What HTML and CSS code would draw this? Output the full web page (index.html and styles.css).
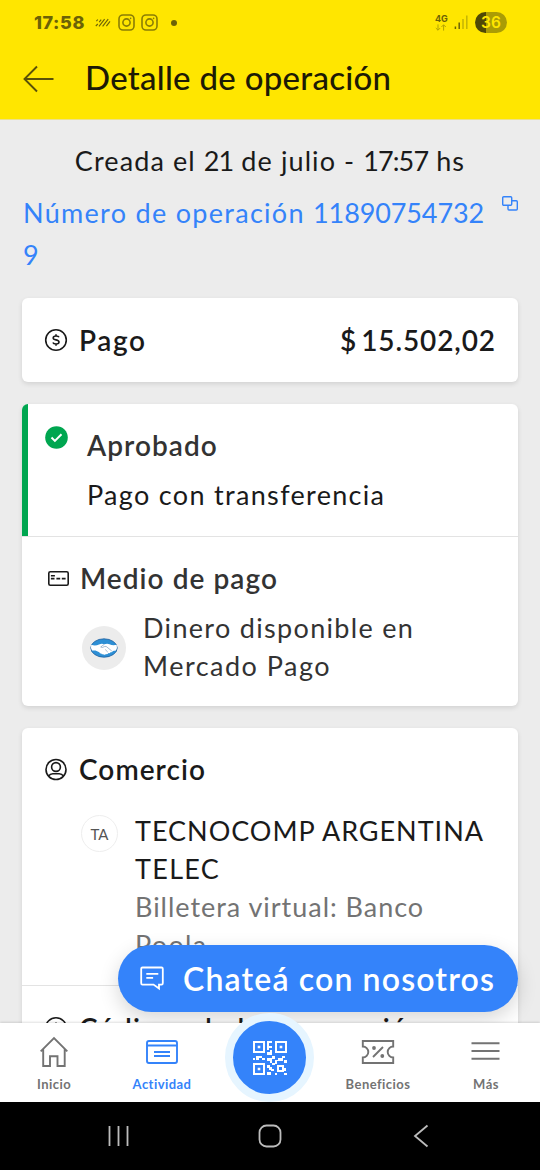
FILE: index.html
```html
<!DOCTYPE html>
<html lang="es">
<head>
<meta charset="utf-8">
<title>Detalle de operación</title>
<link rel="stylesheet" href="styles.css">
</head>
<body>
<div class="phone">
  <header class="top">
    <div class="status">
      <span class="clock">17:58</span>
      <svg class="rain" width="16" height="10" viewBox="0 0 16 10"><path d="M.8 8 2.8 6M1.400 3.200 2.800 1.500M4 8.400 9.600 1.200M7.600 8.400 13.200 1.200M4.200 4.200 6.200 1.600M11.400 8.200 15 3.400"/></svg>
      <svg class="insta" width="17" height="17" viewBox="0 0 17 17"><rect x="1" y="1" width="15" height="15" rx="4"/><circle cx="8.500" cy="8.500" r="3.600"/><circle class="dot" cx="12.600" cy="4.400" r=".8"/></svg>
      <svg class="insta second" width="17" height="17" viewBox="0 0 17 17"><rect x="1" y="1" width="15" height="15" rx="4"/><circle cx="8.500" cy="8.500" r="3.600"/><circle class="dot" cx="12.600" cy="4.400" r=".8"/></svg>
      <i class="more"></i>
      <div class="network"><span class="net-label">4G</span><svg width="12" height="7" viewBox="0 0 12 7"><path d="M3 .4v5.800M.8 4 3 6.200 5.200 4M8.600 6.600V.8M6.400 3 8.600.8 10.800 3"/></svg></div>
      <svg class="signal" width="14" height="15" viewBox="0 0 14 15"><path class="on" d="M1.400 11.400V14M5.200 7.500V14"/><path class="off" d="M9 4v10M12.800.5V14"/></svg>
      <span class="battery">36</span>
    </div>
    <div class="titlebar">
      <svg width="32" height="28" viewBox="0 0 32 28"><path d="M30.500 14H2M14 1.500 1.500 14 14 26.500"/></svg>
      <h1>Detalle de operación</h1>
    </div>
  </header>

  <main class="content">
    <p class="created">Creada el <span class="num">21</span> de julio - <span class="num">17:57</span> hs</p>
    <div class="opnum">
      <p>Número de operación <span class="num">11890754732</span><br>9</p>
      <svg width="16" height="15" viewBox="0 0 16 15"><rect x=".7" y=".7" width="9" height="8.600" rx="1"/><path d="M9.700 4.700h4.600q1 0 1 1v7.300q0 1-1 1H7q-1 0-1-1V9.300"/></svg>
    </div>

    <section class="card amount">
      <svg class="ic" width="24" height="24" viewBox="0 0 24 24"><circle cx="12" cy="12" r="10.300"/><path d="M15 9.300Q14.600 8 12.100 8 9.200 8 9.200 9.900c0 2.700 5.800 1.300 5.800 4.100 0 2-2.900 2-2.900 2-2.700 0-3.200-1.600-3.200-1.600M12 6.200V8m0 8v1.800"/></svg>
      <h2 class="t-pago">Pago</h2>
      <strong class="sum"><span>$</span>15.502,02</strong>
    </section>

    <section class="card">
      <div class="approved">
        <svg width="23" height="23" viewBox="0 0 23 23"><circle cx="11.500" cy="11.500" r="11.300"/><path d="m6.500 11.500 3.400 3.400L16.500 8.300"/></svg>
        <div><h2>Aprobado</h2><p class="wide">Pago con transferencia</p></div>
      </div>
      <div class="method">
        <div class="head">
          <svg class="ic" width="21" height="15" viewBox="0 0 21 15"><rect x=".8" y=".8" width="19.400" height="13.400" rx="1.500"/><path d="M2.900 4.700h4M2.900 7.600h3.600M8.400 7.600h3.800M13.800 7.600h3.800"/></svg>
          <h2>Medio de pago</h2>
        </div>
        <div class="funds">
          <span class="wallet"><svg width="28" height="20" viewBox="0 0 28 20"><ellipse cx="14" cy="10" rx="13.200" ry="9.200" fill="#2d8fd5" stroke="#1f5f9e" stroke-width=".8"/><path d="M1.200 6.800Q5.500 8.300 9 6.400q3-1.300 5.300-.1Q17 5.200 19.500 6.200q3 1.500 7.200.6.800 3-.7 5.600l-3.200.6q-.6 1.500-2 1.100-.6 1.600-2.200 1-.9 1.500-2.400.9-1.600 1.300-2.900.2-1.500.5-2-.8-1.600.2-2-1.200L5.500 12.600 2 12.400Q.4 10 1.200 6.800Z" fill="#fff"/><path d="M14.300 6.300 10.700 9q1.700 1.200 3.600-.4l1.800-.2 5.700 4.600M15.200 11.500l2.600 2.600" stroke="#7f9dbd" stroke-width=".7"/></svg></span>
          <p><span class="wide">Dinero disponible en</span><br><span class="wide merc">Mercado Pago</span></p>
        </div>
      </div>
    </section>

    <section class="card shop">
      <div class="head">
        <svg class="ic" width="24" height="24" viewBox="0 0 24 24"><circle cx="12" cy="12.500" r="10"/><circle cx="12" cy="10" r="4.400"/><path d="M4.600 19.200Q6 16.800 8.800 16.800h6.400q2.800 0 4.200 2.400"/></svg>
        <h2>Comercio</h2>
      </div>
      <div class="merchant">
        <span class="avatar">TA</span>
        <p>TECNOCOMP ARGENTINA<br><span class="wide">TELEC</span><br><span class="bank">Billetera virtual: Banco<br><span class="wide">Poola</span></span></p>
      </div>
      <div class="codes">
        <svg class="ic" width="24" height="24" viewBox="0 0 24 24"><circle cx="12" cy="12" r="10.300"/><path d="M12 6.500v2M12 10.500v7"/></svg>
        <h2>Códigos de la transacción</h2>
      </div>
    </section>
  </main>

  <button class="chat">
    <svg width="24" height="25" viewBox="0 0 24 25"><path d="M2.500 1.500h19q1.300 0 1.300 1.300v14.500q0 1.300-1.300 1.300H19v4l-5.500-4h-11q-1.300 0-1.300-1.300V2.800q0-1.300 1.300-1.300ZM6.300 7.900h12M6.300 11.800h6.800"/></svg>
    <span>Chateá con nosotros</span>
  </button>

  <nav class="tabs">
    <a class="tab"><svg width="30" height="32" viewBox="0 0 30 32"><path d="M1.700 15.300 15 2l13.300 13.300M4.200 13v17h6.800V20.200h7.500V30h7.200V13"/></svg><span>Inicio</span></a>
    <a class="tab active"><svg width="34" height="32" viewBox="0 0 34 32"><rect x="2" y="5" width="30" height="22" rx="2"/><path d="M2 9.500h30M9 16h16M9 20h16"/></svg><span>Actividad</span></a>
    <a class="qr"><svg width="34" height="34" viewBox="0 0 34 34"><path d="M1 1h10v10H1ZM23 1h10v10H23ZM1 23h10v10H1Z" stroke="#fff" stroke-width="2"/><path d="M4.700 4.700h2.600v2.600H4.700ZM26.700 4.700h2.600v2.600h-2.600ZM4.700 26.700h2.600v2.600H4.700ZM14 0h5v2h-3v3h3v2h-3v2h-2ZM17 9h2v5h-5v-3h3ZM0 17h2v2H0ZM3 15h6v2H6v2H3ZM9 17h3v2H9ZM14 17h5v-2h3v3h-3v4h-2v-2h-3ZM22 19h3v-2h4v-2h3v2h-2v3h-6v3h-2ZM31 19h3v3h-3ZM14 24h3v2h2v3h-3v-2h-2ZM19 22h3v2h-3ZM14 31h4v3h-4ZM18 28h3v2h-3ZM22 32h2v2h-2ZM31 27h2v3h-2ZM31 32h3v2h-3Z" fill="#fff"/><path d="M25 25h5v5h-5Z" stroke="#fff" stroke-width="2"/></svg></a>
    <a class="tab"><svg width="34" height="32" viewBox="0 0 34 32"><path d="M1.800 5h30.400v5.500a5.500 5.500 0 0 0 0 11V27H1.800v-5.500a5.500 5.500 0 0 0 0-11ZM12 21l10-10"/><circle cx="13" cy="12" r="1.900" class="fill"/><circle cx="21.300" cy="20" r="1.900" class="fill"/></svg><span>Beneficios</span></a>
    <a class="tab"><svg width="30" height="32" viewBox="0 0 30 32"><path d="M.5 7.200h28M.5 15h28M.5 22.800h28"/></svg><span>Más</span></a>
  </nav>

  <footer class="system">
    <svg width="22" height="24" viewBox="0 0 22 24"><path d="M1.500 2v20M10.500 2v20M19.500 2v20"/></svg>
    <svg width="24" height="24" viewBox="0 0 24 24"><rect x="1.500" y="1.500" width="21" height="21" rx="7"/></svg>
    <svg width="16" height="24" viewBox="0 0 16 24"><path d="M14.500 1.500 2 12l12.500 10.500"/></svg>
  </footer>
</div>
</body>
</html>
```
FILE: styles.css
```css
* { box-sizing: border-box; margin: 0; padding: 0; }
body { background: #ececec; font-family: Lato, "Open Sans", sans-serif; color: #1a1a1a; }
svg { flex: none; display: block; fill: none; }
.phone { position: relative; width: 540px; height: 1170px; overflow: hidden; display: flex; flex-direction: column; background: #ececec; }

.top { height: 120px; flex: none; background: #ffe600; border-bottom: 1px solid #ece08a; }
.status { height: 44px; padding: 1px 33px 0 34px; display: flex; align-items: center; color: #6c6206; }
.clock { font: 800 18px/20px Inter, sans-serif; width: 61px; letter-spacing: .6px; }
.rain { stroke: #6c6206; stroke-width: 1.1; }
.insta { stroke: #8a7d05; stroke-width: 1.6; margin-left: 7px; }
.insta .dot { fill: #8a7d05; stroke: none; }
.second { margin-left: 6px; }
.more { width: 6px; height: 6px; border-radius: 50%; background: #6c6206; margin-left: 13px; }
.network { margin-left: auto; width: 13px; }
.net-label { display: block; font: 700 9px/9px Inter, sans-serif; }
.network svg { stroke: #b3a305; stroke-width: 1; margin-top: 1px; }
.signal { margin: 0 7px 0 6px; }
.signal .on { stroke: #6c6206; stroke-width: 1.5; }
.signal .off { stroke: #c4b404; stroke-width: 1.5; }
.battery { width: 32px; height: 21px; border-radius: 11px; background: linear-gradient(90deg, #4f4806 0 11.5px, #aa9c05 11.5px); color: #ffe600; font: 600 15.5px/21px Inter, sans-serif; text-align: center; }
.titlebar { display: flex; align-items: center; height: 70px; padding-left: 23px; }
.titlebar svg { stroke: #5a5108; stroke-width: 1.9; margin-right: 30px; }
h1 { font: 500 33px/40px Lato, sans-serif; color: #1d1a05; letter-spacing: .28px; margin-top: -4px; }

.content { flex: 1; min-height: 0; overflow: hidden; padding: 22px 22px 0; font-size: 27px; }
.created { text-align: center; line-height: 38px; letter-spacing: 1.1px; }
.num { letter-spacing: -.9px; }
.opnum { display: flex; justify-content: space-between; color: #3483fa; line-height: 42px; margin: 12px 0 22px; padding-left: 1px; letter-spacing: 1.3px; }
.opnum .num { letter-spacing: -.12px; }
.opnum svg { stroke: #3483fa; stroke-width: 1.4; margin-top: 4px; }
.card { background: #fff; border-radius: 6px; box-shadow: 0 2px 5px rgba(0,0,0,.11); margin-bottom: 22px; overflow: hidden; }
.ic { stroke: #1a1a1a; stroke-width: 1.6; }
h2 { font-size: 28px; font-weight: 600; line-height: 38px; white-space: nowrap; letter-spacing: 1.05px; }
.t-pago { letter-spacing: 1.6px; }
p { white-space: nowrap; }
.wide { letter-spacing: 1.32px; }
.merc { letter-spacing: 1.5px; }
.amount { height: 84px; display: flex; align-items: center; padding: 0 22px 0 22px; }
.amount h2 { margin-left: 11px; }
.sum { margin-left: auto; font-size: 28px; font-weight: 600; letter-spacing: .9px; }
.sum span { margin-right: 4px; }
.approved { height: 132px; border-left: 6px solid #00a650; display: flex; padding: 23px 0 0 17px; }
.approved svg { margin-top: -1px; }
.approved svg circle { fill: #00a650; }
.approved svg path { stroke: #fff; stroke-width: 2; }
.approved div { margin: -1px 0 0 19px; }
.approved h2 { color: #333; }
.approved p { line-height: 38px; margin-top: 12px; }
.method { height: 170px; border-top: 1px solid #e3e3e3; padding: 22px 0 0 26px; color: #333; }
.head { display: flex; align-items: center; }
.method .head h2 { margin-left: 11px; }
.funds { display: flex; padding-left: 34px; margin-top: 12px; line-height: 38px; }
.wallet { width: 44px; height: 44px; border-radius: 50%; background: #ececec; display: grid; place-items: center; margin: 17px 17px 0 0; }
.shop { padding-top: 22px; height: 340px; }
.shop .head { padding-left: 22px; }
.shop .head h2 { margin-left: 11px; }
.merchant { display: flex; padding-left: 59px; height: 173px; line-height: 38px; margin-top: 24px; letter-spacing: .97px; }
.avatar { width: 37px; height: 37px; border: 1px solid #eee; border-radius: 50%; font-size: 15px; line-height: 36px; letter-spacing: 0; text-align: center; color: #555; margin: 3px 17px 0 0; }
.bank { color: #737373; }
.codes { border-top: 1px solid #e3e3e3; display: flex; align-items: center; padding: 23px 0 0 22px; }
.codes h2 { margin-left: 11px; letter-spacing: 1.3px; }

.chat { position: absolute; left: 118px; top: 945px; width: 400px; height: 67px; border: 0; border-radius: 34px; background: #3483fa; color: #fff; display: flex; align-items: center; padding-left: 22px; box-shadow: 0 7px 20px rgba(0,0,0,.16); }
.chat svg { stroke: #fff; stroke-width: 1.8; margin-right: 19px; }
.chat span { font: 600 32px/40px Lato, sans-serif; white-space: nowrap; letter-spacing: 1.15px; }

.tabs { height: 79px; flex: none; background: #fff; display: grid; grid-template-columns: repeat(5, 108px); position: relative; box-shadow: 0 -1px 2px rgba(0,0,0,.12); }
.tab { display: flex; flex-direction: column; align-items: center; padding-top: 13px; color: #737373; font-size: 13px; font-weight: 700; line-height: 18px; letter-spacing: .45px; }
.tab svg { stroke: currentColor; stroke-width: 1.9; margin-bottom: 7px; }
.tab .fill { fill: currentColor; stroke: none; }
.active { color: #3483fa; }
.qr { width: 89px; height: 89px; border: 8px solid #e6f5ff; border-radius: 50%; background: #3483fa; display: grid; place-items: center; margin: -10px 0 0 9px; }
.system { height: 68px; flex: none; background: #000; display: flex; align-items: center; padding-left: 108px; position: relative; }
.system svg { stroke: #bcbcbc; stroke-width: 1.8; }
.system svg:nth-child(2) { margin-left: 128px; }
.system svg:nth-child(3) { margin-left: 131px; }
```
